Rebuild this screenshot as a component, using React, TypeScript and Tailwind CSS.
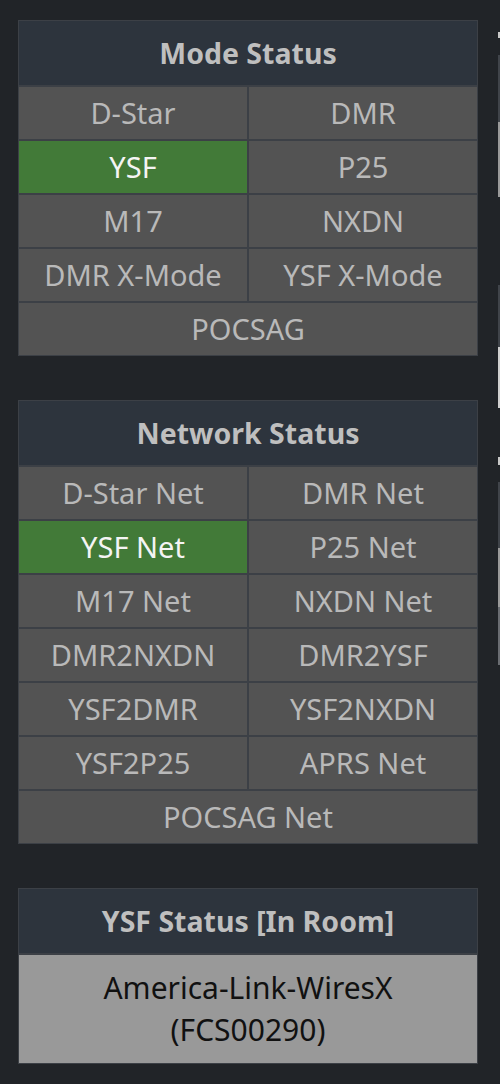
const modes = [
  { label: "D-Star" },
  { label: "DMR" },
  { label: "YSF", active: true },
  { label: "P25" },
  { label: "M17" },
  { label: "NXDN" },
  { label: "DMR X-Mode" },
  { label: "YSF X-Mode" },
  { label: "POCSAG", wide: true },
];

const networks = [
  { label: "D-Star Net" },
  { label: "DMR Net" },
  { label: "YSF Net", active: true },
  { label: "P25 Net" },
  { label: "M17 Net" },
  { label: "NXDN Net" },
  { label: "DMR2NXDN" },
  { label: "DMR2YSF" },
  { label: "YSF2DMR" },
  { label: "YSF2NXDN" },
  { label: "YSF2P25" },
  { label: "APRS Net" },
  { label: "POCSAG Net", wide: true },
];

type Item = { label: string; active?: boolean; wide?: boolean };

const StatusPanel = ({ title, items }: { title: string; items: Item[] }) => {
  return (
    <section className="grid grid-cols-2 gap-[2px] border border-[#3c4046] bg-[#3c4046]">
      <h2 className="col-span-2 flex h-[64px] items-center justify-center bg-[#2d343d] text-[28.5px] font-bold text-[#bfbfbf]">
        {title}
      </h2>
      {items.map((item) => (
        <div
          key={item.label}
          className={
            (item.wide ? "col-span-2 " : "") +
            (item.active
              ? "bg-[#427a38] text-[#f4f4f4] "
              : "bg-[#535353] text-[#b9b9b9] ") +
            "flex h-[52px] items-center justify-center text-[29px]"
          }
        >
          {item.label}
        </div>
      ))}
    </section>
  );
};

export default function App() {
  return (
    <div
      className="flex h-[1084px] w-[500px] overflow-hidden bg-[#212428]"
      style={{ fontFamily: '"Noto Sans", "Open Sans", sans-serif' }}
    >
      <div className="ml-[18px] mt-[20px] flex w-[460px] shrink-0 flex-col gap-[44px]">
        <StatusPanel title="Mode Status" items={modes} />
        <StatusPanel title="Network Status" items={networks} />

        <section className="flex flex-col gap-[2px] border border-[#3c4046] bg-[#3c4046]">
          <h2 className="flex h-[64px] items-center justify-center bg-[#2d343d] text-[28.5px] font-bold text-[#bfbfbf]">
            YSF Status [In Room]
          </h2>
          <div className="flex h-[108px] flex-col items-center justify-center bg-[#999999] text-[30px] leading-[42px] text-[#111111]">
            <span>America-Link-WiresX</span>
            <span>(FCS00290)</span>
          </div>
        </section>
      </div>

      {/* edge of the next column, cut off by the window */}
      <div className="ml-[20px] flex w-[2px] shrink-0 flex-col">
        <div className="mt-[32px] h-[6px] bg-[#c8c8c8]" />
        <div className="mt-[17px] h-[67px] bg-[#40444a]" />
        <div className="h-[75px] bg-[#9a9a9a]" />
        <div className="mt-[88px] h-[62px] bg-[#40444a]" />
        <div className="h-[61px] bg-[#d0d0d0]" />
        <div className="mt-[49px] h-[8px] bg-[#c8c8c8]" />
        <div className="mt-[17px] h-[66px] bg-[#40444a]" />
        <div className="h-[59px] bg-[#9a9a9a]" />
        <div className="h-[58px] bg-[#6a6d72]" />
      </div>
    </div>
  );
}
